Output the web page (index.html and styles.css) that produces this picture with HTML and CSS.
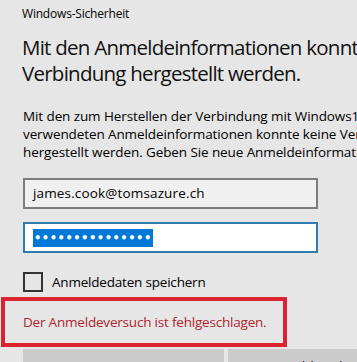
FILE: index.html
```html
<html>
<head>
	<meta charset="utf-8">
	<meta name="viewport" content="width=device-width, initial-scale=1">
	<title>Windows-Sicherheit</title>
	<link rel="stylesheet" href="styles.css">
</head>
<body>

	<main class="dialog">
		<div class="caption">Windows-Sicherheit</div>
		<h1 class="heading">Mit den Anmeldeinformationen konnte keine<br>Verbindung hergestellt werden.</h1>
		<p class="message">Mit den zum Herstellen der Verbindung mit Windows10-PC<br>verwendeten Anmeldeinformationen konnte keine Verbindung<br>hergestellt werden. Geben Sie neue Anmeldeinformationen ein.</p>

		<div class="field user">james.cook@tomsazure.ch</div>
		<div class="field pass"><span class="selected">&bull;&bull;&bull;&bull;&bull;&bull;&bull;&bull;&bull;&bull;&bull;&bull;&bull;&bull;&bull;</span></div>

		<label class="remember">
			<span class="box"></span>
			<span>Anmeldedaten speichern</span>
		</label>

		<div class="error">Der Anmeldeversuch ist fehlgeschlagen.</div>

		<div class="buttons">
			<button>OK</button>
			<button>Abbrechen</button>
		</div>
	</main>

</body>
</html>
```

FILE: styles.css
```css
*{
	box-sizing: border-box;
	padding: 0;
	margin: 0;
}
html, body
{
	width: 357px;
	height: 362px;
	overflow: hidden;
	background: #e6e6e6;
}
body
{
	font-family: "Open Sans", "Noto Sans", sans-serif;
	color: #000;
}
.dialog
{
	width: 460px;
	padding: 6px 0 0 23px;
}
.caption
{
	font-size: 12px;
	line-height: 16px;
	margin-left: -1px;
	letter-spacing: -0.2px;
}
.heading
{
	font-weight: normal;
	font-size: 20.5px;
	line-height: 26px;
	letter-spacing: -0.75px;
	margin-top: 12px;
	white-space: nowrap;
	margin-left: -1px;
	color: #111;
}
.message
{
	font-size: 13.5px;
	line-height: 18px;
	letter-spacing: -0.1px;
	margin-top: 21px;
	white-space: nowrap;
}
.field
{
	width: 295px;
	height: 31px;
	border: 2px solid #7d7d7d;
	background: #f0f0f0;
	font-size: 13.5px;
	line-height: 27px;
	padding-left: 8px;
	letter-spacing: 0.15px;
}
.user
{
	margin-top: 17px;
}
.pass
{
	margin-top: 13px;
	background: #fff;
	border-color: #2f7cb3;
	display: flex;
	align-items: center;
}
.selected
{
	background: #0078d7;
	color: #fff;
	font-family: "DejaVu Sans", sans-serif;
	font-size: 11.5px;
	font-weight: bold;
	line-height: 18px;
	letter-spacing: 0.5px;
	padding: 0 1px;
}
.remember
{
	display: flex;
	align-items: center;
	gap: 9px;
	margin-top: 19px;
	font-size: 13.5px;
	letter-spacing: -0.2px;
	height: 20px;
}
.remember .box
{
	width: 20px;
	height: 20px;
	border: 2px solid #333;
}
.error
{
	margin: 5px 0 0 -22px;
	width: 286px;
	height: 50px;
	border: 4px solid #d9242f;
	padding-left: 18px;
	color: #b1242c;
	font-size: 13.5px;
	letter-spacing: -0.2px;
	line-height: 42px;
	white-space: nowrap;
}
.buttons
{
	display: flex;
	gap: 4px;
	margin-top: 2px;
}
button
{
	width: 201px;
	height: 32px;
	border: 0;
	background: #cccccc;
	font-family: "Open Sans", "Noto Sans", sans-serif;
	font-size: 14px;
	color: #000;
	padding-top: 2px;
}
```
